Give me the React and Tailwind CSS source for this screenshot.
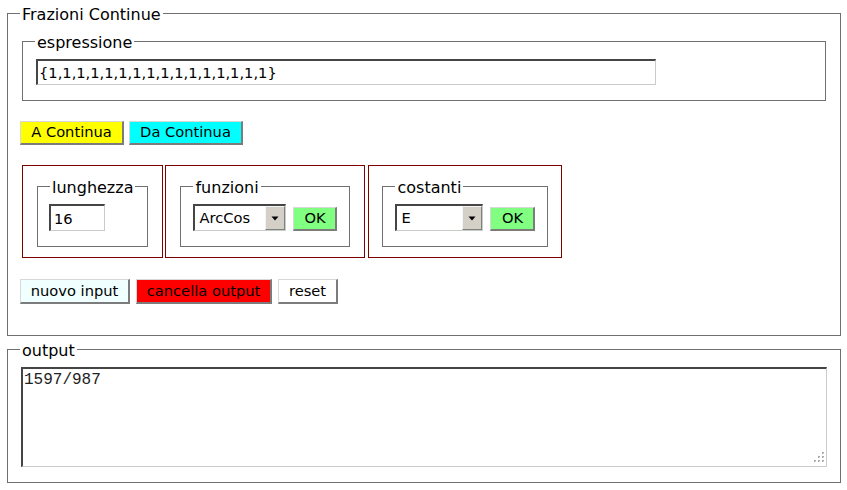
import React from "react";

const raised =
  "border-t border-l border-t-[#d8d8d8] border-l-[#d8d8d8] border-r-2 border-b-2 border-r-[#7c7c7c] border-b-[#7c7c7c]";
const sunken =
  "border-t-2 border-l-2 border-t-[#454545] border-l-[#454545] border-r border-b border-r-[#c8cdc8] border-b-[#c8cdc8]";

function Btn({ className, children }) {
  return (
    <button
      type="button"
      className={`flex items-center justify-center text-[14.67px] leading-none text-black ${raised} ${className}`}
    >
      {children}
    </button>
  );
}

function Legend({ children }) {
  return <legend className="px-[2px] pt-[2px] text-[16px] leading-[21px]">{children}</legend>;
}

function FakeSelect({ className, value }) {
  return (
    <div className={`flex h-[27px] bg-white ${sunken} ${className}`}>
      <span className="flex-1 pl-[4px] text-[14.67px] leading-[24px]">{value}</span>
      <span className="flex w-[20px] items-center justify-center border-t border-l border-t-[#f4f4f4] border-l-[#f4f4f4] border-r border-b border-r-[#808080] border-b-[#808080] bg-[#d4d0c8]">
        <svg width="8" height="5" viewBox="0 0 8 5">
          <path d="M0.5 0.5h7L4 4.5z" fill="#000" />
        </svg>
      </span>
    </div>
  );
}

function Grip() {
  const dots = [
    [9, 0],
    [5, 4],
    [9, 4],
    [1, 8],
    [5, 8],
    [9, 8],
  ];
  return (
    <svg width="12" height="12" viewBox="0 0 12 12">
      {dots.map(([x, y]) => (
        <g key={`${x}-${y}`}>
          <rect x={x} y={y} width="2" height="2" fill="#a8a8a8" />
          <rect x={x + 1} y={y + 1} width="1" height="1" fill="#d8d8d8" />
        </g>
      ))}
    </svg>
  );
}

export default function App() {
  return (
    <div className="min-h-[490px] bg-white pl-[7px] pr-[6px] pt-[2px] text-black font-['DejaVu_Sans','Verdana',sans-serif]">
      {/* main panel */}
      <fieldset className="border border-[#707070] px-[12px] pb-[31px]">
        <Legend>Frazioni Continue</Legend>

        <fieldset className="mx-[2px] mt-[5px] border border-[#707070] px-[12px] pb-[15px]">
          <Legend>espressione</Legend>
          <input
            type="text"
            defaultValue="{1,1,1,1,1,1,1,1,1,1,1,1,1,1,1,1}"
            className={`mt-[6px] ml-[1px] block h-[26px] w-[620px] bg-white pl-[1px] text-[14.67px] outline-none ${sunken}`}
          />
        </fieldset>

        <div className="mt-[20px] flex gap-[5px]">
          <Btn className="h-[24px] w-[104px] bg-[#ffff00]">A Continua</Btn>
          <Btn className="h-[24px] w-[114px] bg-[#00ffff]">Da Continua</Btn>
        </div>

        {/* parameter boxes */}
        <div className="mt-[20px] ml-[2px] flex items-start">
          <div className="border border-[#800000] px-[12px] pt-[9px] pb-[10px]">
            <fieldset className="mx-[2px] border border-[#707070] px-[12px] pb-[15px]">
              <Legend>lunghezza</Legend>
              <input
                type="text"
                defaultValue="16"
                className={`mt-[6px] -ml-[1px] block h-[27px] w-[56px] bg-white pl-[3px] text-[14.67px] outline-none ${sunken}`}
              />
            </fieldset>
          </div>

          <div className="ml-[2px] border border-[#800000] px-[12px] pt-[9px] pb-[10px]">
            <fieldset className="mx-[2px] border border-[#707070] px-[12px] pb-[15px]">
              <Legend>funzioni</Legend>
              <div className="mt-[6px] flex items-end gap-[7px]">
                <FakeSelect className="w-[93px]" value="ArcCos" />
                <Btn className="h-[24px] w-[44px] bg-[#80ff80]">OK</Btn>
              </div>
            </fieldset>
          </div>

          <div className="ml-[3px] border border-[#800000] px-[11px] pt-[9px] pb-[10px]">
            <fieldset className="mx-[2px] border border-[#707070] px-[12px] pb-[15px]">
              <Legend>costanti</Legend>
              <div className="mt-[6px] flex items-end gap-[7px]">
                <FakeSelect className="w-[88px]" value="E" />
                <Btn className="h-[24px] w-[45px] bg-[#80ff80]">OK</Btn>
              </div>
            </fieldset>
          </div>
        </div>

        <div className="mt-[21px] flex gap-[6px]">
          <Btn className="h-[25px] w-[110px] bg-[#f0ffff]">nuovo input</Btn>
          <Btn className="h-[25px] w-[136px] bg-[#ff0000]">cancella output</Btn>
          <Btn className="h-[25px] w-[60px] bg-white">reset</Btn>
        </div>
      </fieldset>

      {/* output */}
      <fieldset className="mt-[2px] border border-[#707070] px-[12px] pb-[15px]">
        <Legend>output</Legend>
        <div className="relative mt-[6px] ml-[1px] w-[806px]">
          <textarea
            defaultValue="1597/987"
            className={`block h-[100px] w-[806px] resize-none bg-white px-[1px] pt-[2px] text-[16px] leading-[18px] text-[#222] outline-none font-['Liberation_Mono','Courier_New',monospace] ${sunken}`}
          />
          <div className="absolute right-[2px] bottom-[3px] leading-none">
            <Grip />
          </div>
        </div>
      </fieldset>
    </div>
  );
}
